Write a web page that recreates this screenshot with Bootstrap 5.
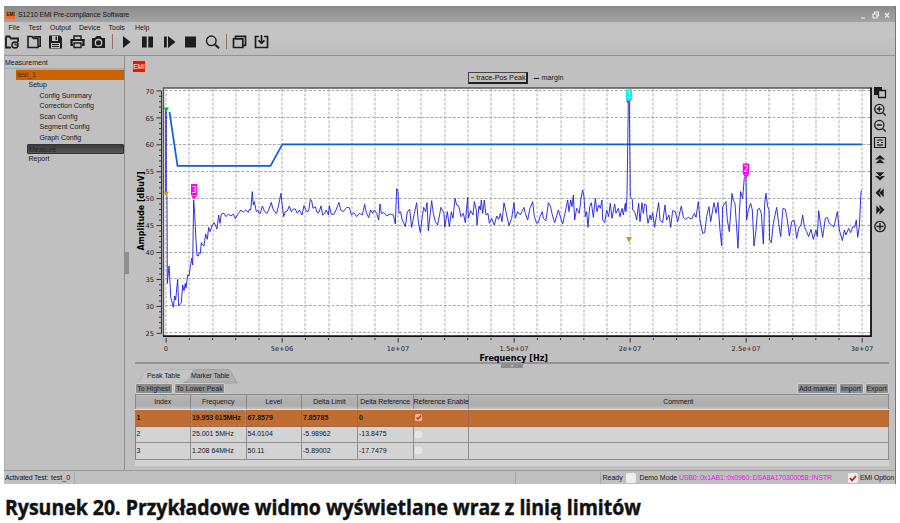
<!DOCTYPE html>
<html lang="pl">
<head>
<meta charset="utf-8">
<meta name="viewport" content="width=device-width, initial-scale=1">
<title>S1210 EMI Pre-compliance Software</title>
<link href="https://cdn.jsdelivr.net/npm/bootstrap@5.3.0/dist/css/bootstrap.min.css" rel="stylesheet">
<style>
body{background:#fff;width:900px;height:523px;overflow:hidden;font-family:"Liberation Sans",Arial,sans-serif;font-size:7px;line-height:10px;color:#161616;padding:6px 4px 0 4px}
svg{display:block;overflow:visible}
.app-window{width:892px;height:478px;background:#c0c0c0;border-right:1px solid #777}
.title-strip{height:16px;background:linear-gradient(#8b8b8b,#a4a4a4);font-size:7px;padding:1px 3px 0 2px}
.title-strip b{background:#f26a2a;color:#220;font-size:4.5px;width:9px;height:8px;line-height:8px;text-align:center;margin-right:3px}
.title-strip span{letter-spacing:-.11px}
.menu-strip{height:11px;padding:0 0 0 4.5px;background:#c3c3c3;line-height:12px}
.tool-strip{height:23px;gap:4.6px;background:linear-gradient(#c6c6c6,#bdbdbd);border-bottom:1px solid #939393;padding-bottom:5px}
.tool-strip svg{width:17px;height:16px}
.tool-strip i{width:1px;height:15px;background:#96705e}
.work{height:414px}
.tree{width:120.5px;border-left:1px solid #aaa;border-right:1px solid #8d8d8d}
.tree>div{height:10.6px;line-height:10.6px;white-space:nowrap}
.tree .tree-head{height:13px;line-height:13px;border-bottom:1px solid #aaa}
.tree .tree-root{height:10.5px;line-height:10.5px;background:#ca6200;margin:0 0 .6px 11px;padding-left:1px;border-top:1px solid #82b8ef;color:#4b2500}
.tree .node{padding-left:23.5px}
.tree .leaf{padding-left:34.5px}
.tree .picked{background:linear-gradient(#3c3c3c,#585858);margin-left:22px;padding-left:1px;color:#242424;border:1px solid #333;border-radius:1px;line-height:9px}
.grip{width:4px;height:22px;background:#909090;margin-top:196px}
.head-row{height:28px;padding:4.5px 0 0 4.5px}
.emi-mark{background:#ef1010;color:#fff;width:12px;height:11px;line-height:11px;font-size:6.4px;text-align:center}
.legend-box{margin-left:322.5px;margin-top:11.5px;width:60px;height:12px;border:1px solid #444;border-right:2px solid #222;border-bottom:2px solid #222;line-height:9px;font-size:7.2px;white-space:nowrap}
.legend-box::before{content:"";width:5px;height:1px;background:#44f;margin:0 2px 0 2px}
.legend-two{margin:11.5px 0 0 6px;font-size:7.2px;line-height:12px}
.legend-two::before{content:"";width:5px;height:1px;background:#000;margin-right:3px}
.side-tools{width:16px;padding:2px 0 0 0}
.side-tools svg{width:14px;height:14px;margin-bottom:2.7px}
.lower{width:760px;padding-left:6px}
.rule{height:2px;background:#939393}
.down-grip{width:22px;height:4px;background:#8d8d8d;margin-left:366px;color:#ddd;font-size:4px;line-height:3px}
.tabs-row{height:15px}
.acts{gap:1px;height:11px}
.act{background:#8e8e8e;border:1px solid #cfcfcf;border-radius:2px;height:11px;line-height:9px;text-align:center;white-space:nowrap;color:#222}
.marks{width:754px;table-layout:fixed;border-collapse:collapse;border:1px solid #818181;background:#d3d3d3;line-height:10px}
.marks th{height:15px;padding:0;font-weight:400;text-align:center;background:linear-gradient(#b4b4b4,#acacac 70%,#c9c9c9);border:1px solid #8a8a8a;border-bottom-color:#ddd;white-space:nowrap;letter-spacing:-.05px}
.marks td{height:16.5px;padding:0 1px;border-right:1px solid #8f8f8f;border-bottom:1px solid #8f8f8f;border-top:1px solid #bbb;font-size:7px;white-space:nowrap}
.marks .on td{background:#c16d31;border-color:#9b6a48;font-weight:700}
.marks .on td:nth-child(2){outline:1px dashed #6b9bc6;outline-offset:-1px;letter-spacing:-.05px}
.cbox{width:7px;height:7px;background:#e6e6e6;border-radius:1.5px}
.marks .on .cbox{background:#f3bd98}
.tail{width:754px;height:6px;background:#d2d2d2}
.status-strip{height:14px;border-top:1px solid #999;line-height:14px}
.sbox{width:10px;height:10px;background:#eee;border-radius:2px}
.vbar{width:1px;height:12px;background:#a7a7a7}
.addr{color:#ee12ee;width:153px;letter-spacing:-.17px}
.figure-title{font-family:"Open Sans","Noto Sans",sans-serif;font-weight:700;font-size:21px;height:30px;margin:9px 0 0 1px}
</style>
<script src="https://cdn.jsdelivr.net/npm/bootstrap@5.3.0/dist/js/bootstrap.bundle.min.js"></script>
</head>
<body>
<div class="app-window d-flex flex-column">
  <div class="title-strip d-flex align-items-center flex-shrink-0">
    <b>EMI</b><span class="flex-grow-1">S1210 EMI Pre-compliance Software</span>
    <svg width="32" height="10" fill="none" stroke="#eee" stroke-width="1.2"><path d="M1 8h4M13 4h4v4h-4zM14.500 4V2h4v4h-1.500M25 3l4 4.500M29 3l-4 4.500"/></svg>
  </div>
  <div class="menu-strip d-flex flex-shrink-0">
    <span style="width:20px">File</span><span style="width:21.500px">Test</span><span style="width:29px">Output</span><span style="width:29.500px">Device</span><span style="width:26.500px">Tools</span><span>Help</span>
  </div>
  <div class="tool-strip d-flex align-items-center flex-shrink-0">
    <svg viewBox="0 0 17 16" fill="none" stroke="#1d1d1d" stroke-width="1.800"><path d="M7 13.500H2V3M1.500 2.500h4l1.500 2h7V8"/><circle cx="11" cy="11" r="3" stroke-width="1.500"/><path d="M11 11V9M11 11h2" stroke-width="1"/></svg>
    <svg viewBox="0 0 17 16" fill="none" stroke="#1d1d1d" stroke-width="1.600"><path d="M2 13.500V2.500h4l1.500 2H12v9zM7.500 2.700h6.700v9.500h-2"/></svg>
    <svg viewBox="0 0 17 16"><path fill="#1d1d1d" d="M2 1.500h11l2 2v11H2z"/><path fill="#c0c0c0" d="M5 2h6v5H5zM4 9h9v5H4z"/><path fill="#1d1d1d" d="M8.500 2.500H10V6H8.500zM5 10h7v1H5zM5 12h7v1H5z"/></svg>
    <svg viewBox="0 0 17 16" fill="none" stroke="#1d1d1d"><path stroke-width="1.500" d="M5 5V2h7v3"/><path d="M4 11H2.500V6h12v5H13" stroke-width="2.200"/><path stroke-width="1.400" d="M5 9h7v4.500H5z"/></svg>
    <svg viewBox="0 0 17 16"><path fill="#1d1d1d" d="M2 4h3l1.500-2h4L12 4h3v10H2z"/><circle cx="8.500" cy="8.700" r="3.200" fill="none" stroke="#c5c5c5" stroke-width="1.300"/></svg>
    <i></i>
    <svg viewBox="0 0 17 16"><path fill="#1d1d1d" d="M5 2l7.500 6L5 14z"/></svg>
    <svg viewBox="0 0 17 16"><path fill="#1d1d1d" d="M3 2.500h4.700v11H3zM9.300 2.500H14v11H9.300z"/></svg>
    <svg viewBox="0 0 17 16"><path fill="#1d1d1d" d="M3 2.500h2.800v11H3zM7 2l7.500 6L7 14z"/></svg>
    <svg viewBox="0 0 17 16"><path fill="#1d1d1d" d="M3 2.500h11v11H3z"/></svg>
    <svg viewBox="0 0 17 16" fill="none" stroke="#1d1d1d" stroke-width="1.400"><circle cx="7.300" cy="6.800" r="4.800"/><path stroke-width="2" d="M11 10.500l4 3.800"/></svg>
    <i></i>
    <svg viewBox="0 0 17 16" fill="none" stroke="#1d1d1d" stroke-width="1.700"><path d="M2.500 4.800h9.300v8.700H2.500zM4.500 4.500V2.300h10v9h-2.500"/></svg>
    <svg viewBox="0 0 17 16" fill="none" stroke="#1d1d1d" stroke-width="1.700"><path d="M6 2.500H2.500v11h12v-11H11M8.500 1v8M5.500 6.300l3 3 3-3"/></svg>
  </div>

  <div class="work d-flex flex-shrink-0">
    <div class="tree flex-shrink-0">
      <div class="tree-head">Measurement</div>
      <div class="tree-root">test_1</div>
      <div class="node">Setup</div>
      <div class="leaf">Config Summary</div>
      <div class="leaf">Correction Config</div>
      <div class="leaf">Scan Config</div>
      <div class="leaf">Segment Config</div>
      <div class="leaf">Graph Config</div>
      <div class="picked">Measure</div>
      <div class="node">Report</div>
    </div>
    <div class="grip flex-shrink-0"></div>
    <div class="flex-grow-1">
      <div class="head-row d-flex align-items-start">
        <div class="emi-mark">EMI</div>
        <div class="legend-box d-flex align-items-center">trace-Pos Peak</div>
        <div class="legend-two d-flex align-items-center">margin</div>
      </div>
      <div class="d-flex">
        <svg class="flex-shrink-0" width="743.500" height="278" viewBox="129 84 743.500 278" id="plot">
          <rect x="163.500" y="88" width="707" height="248" fill="#fff"/>
          <g id="grid" stroke="#adadad" stroke-width="1" stroke-dasharray="3 1.500"></g>
          <path d="M163.500 336V88H871" fill="none" stroke="#555" stroke-width="1.400"/>
          <path d="M163 336.200H871V87.500" fill="none" stroke="#111" stroke-width="1.800"/>
          <g id="ticks" stroke="#333" stroke-width="1"></g>
          <g id="labels" font-family="DejaVu Sans" font-size="6.700" fill="#222"></g>
          <text transform="translate(144 250.500) rotate(-90)" font-family="DejaVu Sans" font-weight="700" font-size="8.800" textLength="79" lengthAdjust="spacingAndGlyphs">Amplitude [dBuV]</text>
          <text x="479.500" y="361" font-family="DejaVu Sans" font-weight="700" font-size="8.800" textLength="68.500" lengthAdjust="spacingAndGlyphs">Frequency [Hz]</text>
          <path d="M169.500 112L177.500 165.800H270.500L282.300 144.300H862" fill="none" stroke="#0a5fe6" stroke-width="1.700"/>
          <path d="M166 109V194" stroke="#0000d8" stroke-width="1.300"/>
          <g fill="none" stroke="#1c1ce8" stroke-width="2.700" stroke-linejoin="bevel">
            <polyline transform="translate(130 220) scale(.33333)" points="109,-85 111,-70 112,190 115,160 117,138 120,185 122,230 130,262 134,228 137,240 143,178 146,258 154,248 158,195 162,212 166,190 168,205 173,165 177,168 181,140 185,115 188,135 191,-60 194,-20 196,20 198,60 201,107 205,108 208,98 211,100 214,68 218,75 222,78 227,42 232,58 236,22 240,35 246,18 252,8 256,15 261,27 266,-15 270,10 274,-18"/>
            <polyline transform="translate(130 80) scale(.33333)" points="274,402 282,400 288,410 295,402 303,408 310,402 316,416 324,402 333,390 340,397 347,390 355,397 358,388 362,390 367,335 370,375 373,365 379,395 384,390 387,400 391,400 397,378 404,395 411,400 416,390 424,367 428,385 433,395 440,400 446,375 453,340 456,370 461,410 466,395 472,393 478,378 484,395 490,387 496,387 502,400 508,390 516,405 522,377 530,395 536,393 541,358 545,362 549,385 556,380 561,397 567,397 573,378 578,405 584,400 589,390 595,405 598,377 604,403 612,403 618,390 627,367 632,390 640,395 650,382 658,383 664,405 672,398 680,410 688,400 697,405 704,373 709,398 716,413 722,390 728,400 733,390 740,400 746,420 750,372"/>
            <polyline transform="translate(380 180) scale(.33333)" points="0,72 4,100 12,98 20,108 30,102 40,105 46,132 50,26 54,35 57,100 62,95 66,118 76,140 82,95 89,88 95,142 103,100 110,68 115,125 121,158 127,110 131,82 137,95 141,68 145,153 155,62 160,100 166,125 173,135 183,82 192,100 194,142 202,95 208,140 214,95 219,115 225,55 230,75 236,78 243,110 250,100 256,128 263,52 265,115 272,92 279,105 283,65 289,90 291,135 297,78 301,90 304,60 308,100 313,60 318,105 324,100 328,130 335,115 343,135 350,108 356,118 361,100 366,125 372,68 380,105 387,137 395,115 402,68 406,115 413,95 421,105 432,82 436,100 443,120 450,85 458,65 463,110 470,130 475,128 480,110 487,95 490,115 498,122 505,68 511,78 517,105 524,128 530,108 535,90 541,110 548,132 555,100 563,60 567,95 572,60 576,80 580,45 584,120 590,85 598,100 603,55 608,30 612,50 616,110 620,95 624,142 629,80 634,68 640,112 646,55 651,95 656,75 661,85 666,60 668,120 674,128 680,90 686,110 691,70 696,115 704,72 708,100 715,85 720,110 726,85 730,105 736,70 738,95 741,50 745,-235 748,-235 751,50"/>
            <polyline transform="translate(620 170) scale(.33333)" points="31,80 37,88 38,120 44,125 50,150 56,100 60,155 66,98 70,130 74,102 79,105 80,130 84,160 90,135 94,150 98,128 104,172 112,120 116,98 120,150 128,158 135,105 140,150 147,135 152,172 158,122 166,125 173,155 184,108 190,142 197,148 205,142 215,147 223,130 228,142 235,95 240,150 248,190 254,188 260,140 267,110 272,155 282,98 288,130 294,97 300,180 305,228 308,110 318,95 322,150 328,185 336,70 340,92 345,100 354,235 358,130 362,65 368,85 373,22 378,20 380,150 385,120 392,100 397,120 402,228 408,180 413,118 418,115 424,130 430,222 434,100 438,70 443,110 447,118 449,210 454,218 460,160 470,112 476,160 482,200 489,115 496,118 502,150 508,198 515,155 522,150 527,180 530,205 536,175 543,165 548,135 553,170 560,185 566,200 573,178 580,208 588,180 592,200 596,122 602,165 608,202 616,145 622,142 628,160 634,165 642,170 652,125 658,180 667,212 673,180 678,195 686,175 692,188 698,170 704,172 709,150 713,202 718,170 723,64 726,64"/>
          </g>
          <path d="M163.500 107.500h5.500l-2.700 4.500z" fill="#0b3"/>
          <path d="M163.500 191.500h5.500l-2.700 5zM626 237h6l-3 5.500z" fill="#cc9a0a"/>
          <path d="M626 100.500h5l-2.500 4.500z" fill="#2a4"/><path d="M626.500 100.500h4l-2 3z" fill="#f0a"/>
          <path d="M191.500 196h5l-2.500 3.500zM743 174.500h6l-3 3.500z" fill="#f0d"/>
          <rect x="626" y="89.500" width="6" height="11" fill="#00f2f2"/>
          <rect x="191" y="184" width="6.300" height="11.500" fill="#ff00e8"/>
          <rect x="742.800" y="163.500" width="6.300" height="11" fill="#ff00e8"/>
          <g font-family="DejaVu Sans" font-size="8" fill="#fff" text-anchor="middle"><text x="629" y="98">1</text><text x="194.200" y="192.800">3</text><text x="746" y="172">2</text></g>
        </svg>
        <div class="side-tools d-flex flex-column align-items-center">
          <svg viewBox="0 0 14 14"><path fill="#1b1b1b" d="M1 1h8v8H1z"/><path fill="#c0c0c0" stroke="#1b1b1b" stroke-width="1.300" d="M5.500 4.500h7v7h-7z"/></svg>
          <svg viewBox="0 0 14 14" fill="none" stroke="#1b1b1b" stroke-width="1.300"><circle cx="6.300" cy="6" r="4.600"/><path d="M9.500 9.500l3.300 3M6.300 3.500v5M3.800 6h5"/></svg>
          <svg viewBox="0 0 14 14" fill="none" stroke="#1b1b1b" stroke-width="1.300"><circle cx="6.300" cy="6" r="4.600"/><path d="M9.500 9.500l3.300 3M3.800 6h5"/></svg>
          <svg viewBox="0 0 14 14" fill="none" stroke="#1b1b1b" stroke-width="1.200"><path d="M1.500 1.500h11v10h-11zM4 6.500h2M8 6.500h2"/><path d="M5 5V4h4v1M5 8v1.200h4V8"/></svg>
          <svg viewBox="0 0 14 14"><path fill="#1b1b1b" d="M7 2l5 4.500H2z"/><path d="M2 10.500l5-5 5 5z" fill="#1b1b1b" stroke="#c0c0c0" stroke-width=".7"/></svg>
          <svg viewBox="0 0 14 14"><path fill="#1b1b1b" d="M7 11.500L2 7h10z"/><path d="M2 3l5 5 5-5z" fill="#1b1b1b" stroke="#c0c0c0" stroke-width=".7"/></svg>
          <svg viewBox="0 0 14 14"><path fill="#1b1b1b" d="M2.500 6.800l5-5v10z"/><path d="M6 6.800l5-5v10z" fill="#1b1b1b" stroke="#c0c0c0" stroke-width=".7"/></svg>
          <svg viewBox="0 0 14 14"><path fill="#1b1b1b" d="M11.500 6.800l-5-5v10z"/><path d="M8 6.800l-5-5v10z" fill="#1b1b1b" stroke="#c0c0c0" stroke-width=".7"/></svg>
          <svg viewBox="0 0 14 14" fill="none" stroke="#1b1b1b" stroke-width="1.300"><circle cx="7" cy="6.500" r="5.200"/><path d="M7 3v7M3.500 6.500h7"/></svg>
        </div>
      </div>
      <div class="lower">
        <div class="rule"></div>
        <div class="down-grip text-center">▾</div>
        <div class="tabs-row">
          <svg width="120" height="16" viewBox="135 368 120 16" font-family="Liberation Sans" font-size="7" fill="#222">
            <path d="M139 382l5-10q1-2.500 4-2.500h43q4 0 5 3l3 9.500" fill="#c4c4c4" stroke="#aaa" stroke-width=".7"/>
            <path d="M183 383q5-1 7-6l2-4.500q1-3 5-3h30q3 0 4.500 3l3 6q1 3 3 4.500z" fill="#b0b0b0" stroke="#989898" stroke-width=".7"/>
            <text x="147" y="378.300" textLength="33.500">Peak Table</text><text x="191" y="378" textLength="38.500">Marker Table</text>
          </svg>
        </div>
        <div class="acts d-flex">
          <div class="act" style="width:38.500px">To Highest</div><div class="act me-auto" style="width:51px">To Lower Peak</div>
          <div class="act" style="width:41px">Add marker</div><div class="act" style="width:25px">Import</div><div class="act" style="width:24px">Export</div>
        </div>
        <table class="marks">
          <colgroup><col style="width:55.500px"><col style="width:55.500px"><col style="width:55.500px"><col style="width:56px"><col style="width:55.500px"><col style="width:55.500px"><col></colgroup>
          <thead><tr><th>Index</th><th>Frequency</th><th>Level</th><th>Delta Limit</th><th>Delta Reference</th><th>Reference Enable</th><th>Comment</th></tr></thead>
          <tbody>
          <tr class="on"><td>1</td><td>19.953 015MHz</td><td>67.8579</td><td>7.85785</td><td>0</td><td><div class="cbox"><svg width="7" height="7" fill="none" stroke="#d01c10" stroke-width="1.300"><path d="M1.500 3.500L3 5l3-3.500"/></svg></div></td><td></td></tr>
          <tr><td>2</td><td>25.001 5MHz</td><td>54.0104</td><td>-5.98962</td><td>-13.8475</td><td><div class="cbox"></div></td><td></td></tr>
          <tr><td>3</td><td>1.208 64MHz</td><td>50.11</td><td>-5.89002</td><td>-17.7479</td><td><div class="cbox"></div></td><td></td></tr>
          </tbody>
        </table>
        <div class="tail"></div>
      </div>
    </div>
  </div>
  <div class="status-strip d-flex align-items-center flex-shrink-0 text-nowrap">
    <span style="width:47px;padding-left:1px;letter-spacing:-.15px">Activated Test:</span><span style="width:23px">test_0</span><div class="vbar"></div>
    <div class="ms-auto d-flex align-items-center">
      <div class="vbar" style="margin-right:84px"></div><div class="vbar me-1"></div><span style="width:24px;margin-left:-3px">Ready</span><div class="sbox"></div><span style="margin:0 2px 0 3px;width:37.500px;letter-spacing:-.05px">Demo Mode</span><span class="addr">USB0::0x1AB1::0x0960::DSA8A170300058::INSTR</span>
      <div class="sbox" style="margin-left:16px"><svg width="10" height="10" fill="none" stroke="#c11" stroke-width="1.600"><path d="M2 5l2 2.500L8 3"/></svg></div><span style="margin:0 1px 0 2px;letter-spacing:-.1px">EMI Option</span>
    </div>
  </div>
</div>
<div class="figure-title"><svg width="660" height="30"><text x="0" y="21.500" textLength="636" lengthAdjust="spacingAndGlyphs" fill="#111" stroke="#111" stroke-width=".45">Rysunek 20. Przykładowe widmo wyświetlane wraz z linią limitów</text></svg></div>
<script>
const ns = 'http://www.w3.org/2000/svg';
const add = (id, tag, attrs, text) => {
  const e = document.createElementNS(ns, tag);
  for (const k in attrs) e.setAttribute(k, attrs[k]);
  if (text) e.textContent = text;
  document.getElementById(id).appendChild(e);
};
// frequency axis: 0 to 30 MHz, one grid line per MHz
for (let i = 0; i <= 30; i++) {
  const x = 166.2 + i * 23.2;
  add('ticks', 'path', {d: `M${x} 338V${i % 5 ? 340 : 342.5}`});
  add('grid', 'path', {d: `M${Math.round(x)} 89V335`});
}
['0', '5e+06', '1e+07', '1.5e+07', '2e+07', '2.5e+07', '3e+07'].forEach((t, i) =>
  add('labels', 'text', {x: 166 + i * 116, y: 350.5, 'text-anchor': 'middle'}, t));
// amplitude axis: 25 to 70 dBuV
add('ticks', 'path', {d: 'M161.500 91V333.500'});
for (let v = 25; v <= 70; v++) {
  const y = 90.9 + (70 - v) * 5.388;
  add('ticks', 'path', {d: `M${v % 5 ? 159 : 156.5} ${y}H161.5`});
  if (v % 5 === 0) {
    add('grid', 'path', {d: `M165 ${Math.round(y) - .5}H870`});
    add('labels', 'text', {x: 154, y: y + 2.7, 'text-anchor': 'end'}, String(v));
  }
}
</script>
</body>
</html>
